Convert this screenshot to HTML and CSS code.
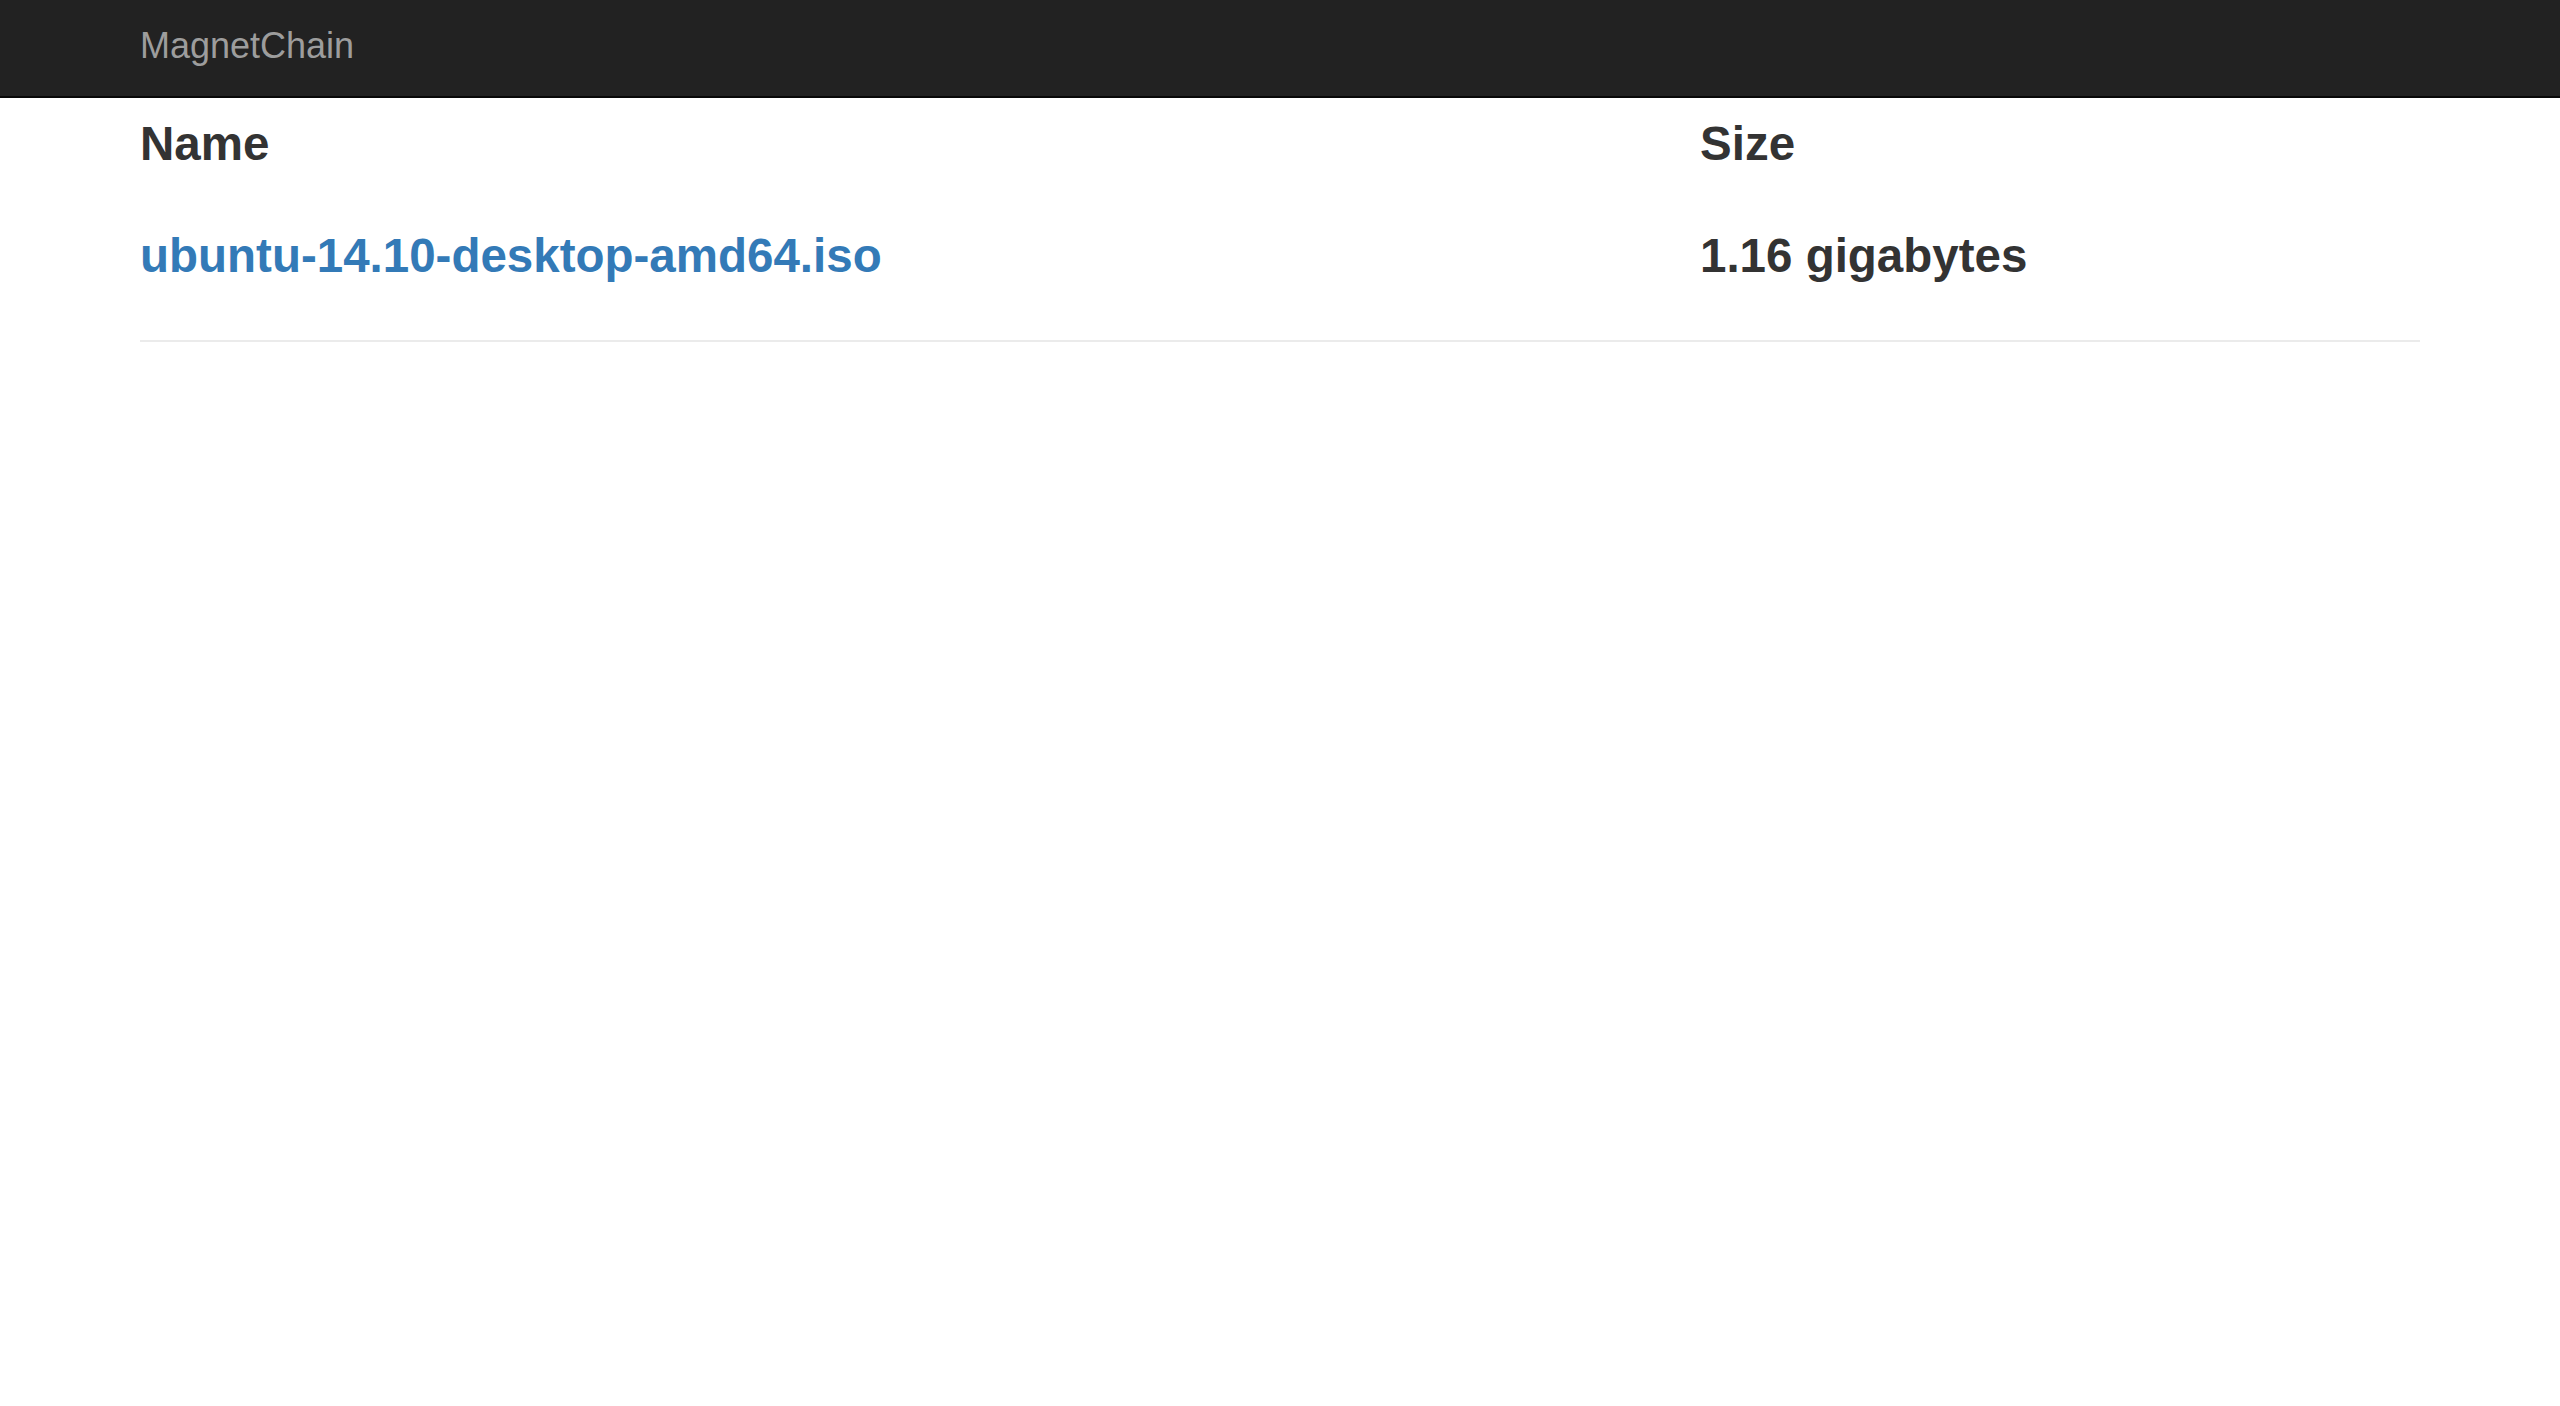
FILE: index.html
```html
<!DOCTYPE html>
<html lang="en">
<head>
<meta charset="utf-8">
<title>MagnetChain</title>
<link rel="stylesheet" href="styles.css">
</head>
<body>
<nav class="navbar">
  <a class="brand" href="#">MagnetChain</a>
</nav>
<main class="content">
  <table class="files">
    <thead>
      <tr>
        <th class="col-name">Name</th>
        <th class="col-size">Size</th>
      </tr>
    </thead>
    <tbody>
      <tr>
        <td class="col-name"><a class="file-link" href="#">ubuntu-14.10-desktop-amd64.iso</a></td>
        <td class="col-size">1.16 gigabytes</td>
      </tr>
    </tbody>
  </table>
</main>
</body>
</html>
```
FILE: styles.css
```css
html, body {
  margin: 0;
  padding: 0;
  background: #ffffff;
}

body {
  font-family: "Liberation Sans", Arial, Helvetica, sans-serif;
  color: #333333;
}

.navbar {
  display: flex;
  align-items: flex-start;
  height: 91px;
  padding: 0 140px 5px;
  background: #222222;
  border-bottom: 2px solid #080808;
}

.brand {
  font-size: 36px;
  line-height: 91px;
  color: #9d9d9d;
  text-decoration: none;
}

.content {
  padding: 0 140px;
}

.files {
  width: 100%;
  border-collapse: collapse;
  border-spacing: 0;
}

.files th,
.files td {
  text-align: left;
  vertical-align: top;
  font-size: 47.5px;
  line-height: 68px;
  font-weight: bold;
  padding: 0;
}

.files th {
  padding-top: 12px;
}

.files td {
  padding-top: 44px;
  padding-bottom: 50px;
  border-bottom: 2px solid #ebebeb;
}

.col-name {
  width: 1560px;
}

.file-link {
  color: #337ab7;
  text-decoration: none;
}
```
